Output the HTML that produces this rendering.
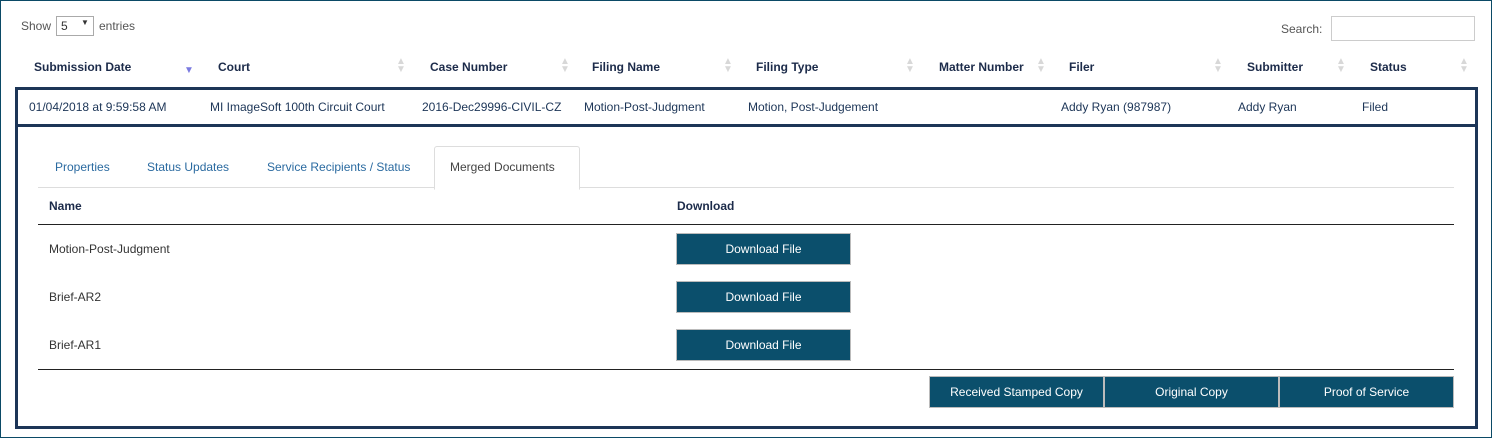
<!DOCTYPE html>
<html><head><style>
body{margin:0;width:1492px;height:438px;background:#fff;font-family:"Liberation Sans",sans-serif;font-size:12px;color:#333;position:relative;overflow:hidden}
.a{position:absolute;white-space:nowrap}
.outer{position:absolute;left:0;top:0;width:1490px;height:436px;border:1px solid #0b4a66}
.h{font-weight:bold;color:#1c2b4a;top:60px}
.r{top:100px;color:#1c3557}
.btn{position:absolute;background:#0b4f6c;color:#fff;text-align:center;border:1px solid #bbb;box-sizing:border-box}
.t{top:160px;color:#2a6aa0}
.s{position:absolute;top:58px;color:#d8d8d8;font-size:10px;line-height:8px}
</style></head><body>
<div class="outer"></div>
<div class="a" style="left:21px;top:19px;color:#555">Show</div>
<div class="a" style="left:56px;top:16px;width:38px;height:20px;border:1px solid #aaa;box-sizing:border-box"></div>
<div class="a" style="left:61px;top:19px">5</div>
<div class="a" style="left:81px;top:18px;font-size:8px">▼</div>
<div class="a" style="left:99px;top:19px;color:#555">entries</div>
<div class="a" style="left:1281px;top:22px;color:#555">Search:</div>
<div class="a" style="left:1331px;top:16px;width:144px;height:25px;border:1px solid #ccc;box-sizing:border-box"></div>

<div class="a h" style="left:34px">Submission Date</div>
<div class="a" style="left:184px;top:65px;color:#7a7ae0;font-size:10px">▼</div>
<div class="a h" style="left:218px">Court</div>
<div class="a h" style="left:430px">Case Number</div>
<div class="a h" style="left:592px">Filing Name</div>
<div class="a h" style="left:756px">Filing Type</div>
<div class="a h" style="left:939px">Matter Number</div>
<div class="a h" style="left:1069px">Filer</div>
<div class="a h" style="left:1247px">Submitter</div>
<div class="a h" style="left:1370px">Status</div>
<div class="s" style="left:396px">▲<br>▼</div>
<div class="s" style="left:560px">▲<br>▼</div>
<div class="s" style="left:723px">▲<br>▼</div>
<div class="s" style="left:905px">▲<br>▼</div>
<div class="s" style="left:1036px">▲<br>▼</div>
<div class="s" style="left:1213px">▲<br>▼</div>
<div class="s" style="left:1336px">▲<br>▼</div>
<div class="s" style="left:1459px">▲<br>▼</div>

<div class="a" style="left:15px;top:87px;width:1463px;height:40px;border:3px solid #1c3557;box-sizing:border-box"></div>
<div class="a" style="left:15px;top:124px;width:1463px;height:305px;border:3px solid #1c3557;box-sizing:border-box"></div>
<div class="a r" style="left:29px">01/04/2018 at 9:59:58 AM</div>
<div class="a r" style="left:210px">MI ImageSoft 100th Circuit Court</div>
<div class="a r" style="left:422px">2016-Dec29996-CIVIL-CZ</div>
<div class="a r" style="left:584px">Motion-Post-Judgment</div>
<div class="a r" style="left:748px">Motion, Post-Judgement</div>
<div class="a r" style="left:1061px">Addy Ryan (987987)</div>
<div class="a r" style="left:1238px">Addy Ryan</div>
<div class="a r" style="left:1362px">Filed</div>

<div class="a" style="left:38px;top:187px;width:1416px;border-top:1px solid #ddd"></div>
<div class="a" style="left:434px;top:146px;width:144px;height:42px;border:1px solid #ddd;border-bottom:1px solid #fff;background:#fff;border-radius:3px 3px 0 0"></div>
<div class="a t" style="left:55px">Properties</div>
<div class="a t" style="left:147px">Status Updates</div>
<div class="a t" style="left:267px">Service Recipients / Status</div>
<div class="a t" style="left:450px;color:#444">Merged Documents</div>

<div class="a" style="left:49px;top:199px;font-weight:bold;color:#1c2b4a">Name</div>
<div class="a" style="left:677px;top:199px;font-weight:bold;color:#1c2b4a">Download</div>
<div class="a" style="left:38px;top:224px;width:1416px;border-top:1px solid #222"></div>
<div class="a" style="left:49px;top:242px">Motion-Post-Judgment</div>
<div class="a" style="left:49px;top:290px">Brief-AR2</div>
<div class="a" style="left:49px;top:338px">Brief-AR1</div>
<div class="btn" style="left:676px;top:233px;width:175px;height:32px;line-height:30px">Download File</div>
<div class="btn" style="left:676px;top:281px;width:175px;height:32px;line-height:30px">Download File</div>
<div class="btn" style="left:676px;top:329px;width:175px;height:32px;line-height:30px">Download File</div>
<div class="a" style="left:38px;top:369px;width:1416px;border-top:1px solid #222"></div>
<div class="btn" style="left:929px;top:376px;width:175px;height:32px;line-height:30px">Received Stamped Copy</div>
<div class="btn" style="left:1104px;top:376px;width:175px;height:32px;line-height:30px">Original Copy</div>
<div class="btn" style="left:1279px;top:376px;width:175px;height:32px;line-height:30px">Proof of Service</div>
</body></html>
